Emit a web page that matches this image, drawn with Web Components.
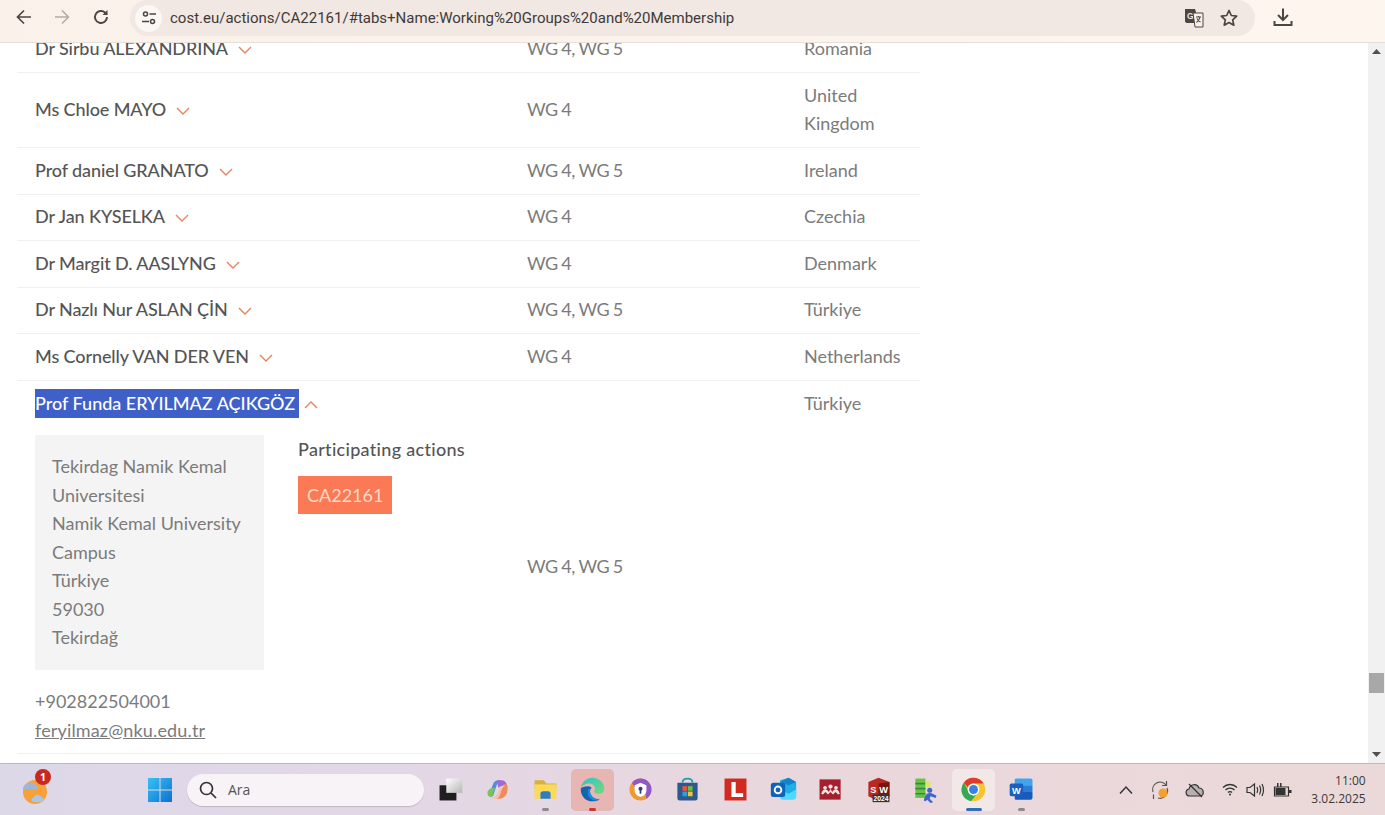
<!DOCTYPE html>
<html lang="en">
<head>
<meta charset="utf-8">
<title>CA22161</title>
<style>
  html, body { height: 100%; margin: 0; }
  body { display: flex; flex-direction: column; overflow: hidden; background: #fff; font-family: "Lato", "Liberation Sans", sans-serif; }
</style>
</head>
<body>
<browser-bar url="cost.eu/actions/CA22161/#tabs+Name:Working%20Groups%20and%20Membership"></browser-bar>

<page-view>
  <member-list>
    <member-row name="Dr Sirbu ALEXANDRINA" groups="WG 4, WG 5" country="Romania"></member-row>
    <member-row name="Ms Chloe MAYO" groups="WG 4" country="United Kingdom"></member-row>
    <member-row name="Prof daniel GRANATO" groups="WG 4, WG 5" country="Ireland"></member-row>
    <member-row name="Dr Jan KYSELKA" groups="WG 4" country="Czechia"></member-row>
    <member-row name="Dr Margit D. AASLYNG" groups="WG 4" country="Denmark"></member-row>
    <member-row name="Dr Nazlı Nur ASLAN ÇİN" groups="WG 4, WG 5" country="Türkiye"></member-row>
    <member-row name="Ms Cornelly VAN DER VEN" groups="WG 4" country="Netherlands"></member-row>
    <member-row name="Prof Funda ERYILMAZ AÇIKGÖZ" groups="WG 4, WG 5" country="Türkiye" open selected>
      <member-detail action="CA22161" phone="+902822504001" email="feryilmaz@nku.edu.tr">
        <span>Tekirdag Namik Kemal Universitesi</span>
        <span>Namik Kemal University Campus</span>
        <span>Türkiye</span>
        <span>59030</span>
        <span>Tekirdağ</span>
      </member-detail>
    </member-row>
  </member-list>
</page-view>

<task-bar>
  <task-btn><svg viewBox="0 0 32 32"><defs><linearGradient id="tv" x1="0" y1="0" x2="1" y2="1"><stop offset="0" stop-color="#ffffff"/><stop offset="1" stop-color="#b5b5b5"/></linearGradient></defs><path d="M3 11h20v18H3z" fill="#1f1f1f"/><path d="M11 3h19v17H11z" fill="url(#tv)"/></svg></task-btn>
  <task-btn><svg viewBox="0 0 32 32"><path fill="#4d8fe0" d="M6 22 11 9c1-3 4-4 7-4h2c-3 1-4 3-5 6l-4 12c-1 2-5 2-5-1z"/><path fill="#a068d8" d="M15 5h6c3 0 5 2 6 5l1 4c-2-2-5-3-8-2l-3 2z"/><path fill="#f08a5d" d="M27 10c2 5 1 14-5 16-2 1-6 1-8 1 3-1 4-3 5-6l3-9c1-2 3-3 5-2z"/><path fill="#7dc15f" d="M4 19c1-3 5-6 9-5l-3 9c-1 3-6 3-6-4z"/><path fill="#f5c4a8" d="M14 27c-3 0-5 0-6-2 3 1 6-1 8-5l3-7c2-1 4-2 6-1-2 0-3 2-4 4l-2 6c-1 3-2 5-5 5z"/></svg></task-btn>
  <task-btn indicator="#8b8b8b"><svg viewBox="0 0 32 32"><path fill="#d8b13c" d="M3 5h11l3 4h12v6H3z"/><path fill="#fbd95a" d="M3 10h26v17H3z"/><path fill="#2f7cc6" d="M10 21c0-2 1-3 3-3h6c2 0 3 1 3 3v6H10z"/></svg></task-btn>
  <task-btn indicator="#c43b36" hover="#e7b5b2"><svg viewBox="0 0 32 32"><defs><linearGradient id="e1" x1="0" y1="0" x2="1" y2="1"><stop offset="0" stop-color="#35c1c9"/><stop offset="1" stop-color="#6fdc7a"/></linearGradient></defs><path fill="url(#e1)" d="M2 15C3 7 9 2 16 2c8 0 14 6 14 13 0 4-3 6-7 6-3 0-5-1-5-3 0-1 1-2 1-3 0-3-3-6-7-6-5 0-9 3-10 6z"/><path fill="#1463ad" d="M2 15c0 9 6 15 14 15 3 0 6-1 8-2-5 1-10-1-11-6-1-3 0-6 2-8-1-1-2-2-4-2-5 0-8 1-9 3z"/><path fill="#1b8bd8" d="M12 14c-2 2-2 6-1 9 1 3 5 6 10 6 2 0 3-1 4-2-4 1-8-1-10-4-2-3-2-6-3-9z"/></svg></task-btn>
  <task-btn><svg viewBox="0 0 32 32"><circle cx="16" cy="16" r="13" fill="#f09a2e"/><path fill="#8f57c7" d="M16 3a13 13 0 0 1 13 13c0 5-3 9-6 11l-2-12c0-3-2-5-5-5s-5 1-7 3L6 8c2-3 6-5 10-5z"/><path fill="#fff" d="M16 8l7 3v6c0 4-3 7-7 8-4-1-7-4-7-8v-6z"/><circle cx="16" cy="15" r="2.4" fill="#3d3a72"/><path d="M15 16h2v5h-2z" fill="#3d3a72"/></svg></task-btn>
  <task-btn><svg viewBox="0 0 32 32"><path fill="#2c5a8f" d="M4 8h24v18c0 2-1 3-3 3H7c-2 0-3-1-3-3z"/><path fill="none" stroke="#2a9bb0" stroke-width="2" d="M10 8c0-3 2-5 6-5s6 2 6 5"/><rect x="10" y="12" width="5.500" height="5.500" fill="#e8563f"/><rect x="16.500" y="12" width="5.500" height="5.500" fill="#6fbb4a"/><rect x="10" y="18.500" width="5.500" height="5.500" fill="#2d9fe0"/><rect x="16.500" y="18.500" width="5.500" height="5.500" fill="#f5c032"/></svg></task-btn>
  <task-btn><svg viewBox="0 0 32 32"><rect x="3" y="3" width="26" height="26" fill="#d32a20"/><path fill="#f3d4cc" d="M11 7h5v13h9v5H11z"/><path fill="#fff" d="M12 7h4v14h9v4H12z"/></svg></task-btn>
  <task-btn><svg viewBox="0 0 32 32"><path fill="#1cb1e6" d="M12 5 22 2l9 5v15l-9 4-10-4z"/><path fill="#0d6dbf" d="M22 2l9 5-9 4-10-4z" opacity=".7"/><path fill="#50d9ff" d="M12 16l10 5 9-5v9c0 2-1 3-3 3H15c-2 0-3-1-3-3z"/><rect x="1" y="8" width="17" height="17" rx="3" fill="#0f63b8"/><circle cx="9.500" cy="16.500" r="4" fill="none" stroke="#fff" stroke-width="2.200"/></svg></task-btn>
  <task-btn><svg viewBox="0 0 32 32"><rect x="3" y="4" width="25" height="24" fill="#a5202f"/><g fill="#f6dfe0"><circle cx="16" cy="12.500" r="2.500"/><circle cx="9.500" cy="14" r="2.200"/><circle cx="22.500" cy="14" r="2.200"/><path d="M5 21c1-4 3-5 5-5 2 0 3 1 4 3l2-4 2 4c1-2 2-3 4-3s4 1 5 5l-2 1-3-3-3 3-3-3-3 3-3-3-3 3z"/></g></svg></task-btn>
  <task-btn><svg viewBox="0 0 32 32"><path fill="#b62a22" d="M4 7l12-5 13 5v17l-13 6-12-6z"/><path fill="#7a1610" d="M16 9l13-2v17l-13 6z"/><text x="10" y="20" font-family="Liberation Sans" font-weight="700" font-size="11" fill="#fff" text-anchor="middle">S</text><text x="22" y="20" font-family="Liberation Sans" font-weight="700" font-size="11" fill="#fff" text-anchor="middle">W</text><rect x="9" y="22" width="20" height="9" fill="#333"/><text x="19" y="30" font-family="Liberation Sans" font-weight="700" font-size="8" fill="#fff" text-anchor="middle">2024</text></svg></task-btn>
  <task-btn><svg viewBox="0 0 32 32"><path fill="#6cc04a" d="M4 3h12v23H4z"/><path fill="#2f8f3a" d="M4 8h12v2H4zm0 6h12v2H4zm0 6h12v2H4z"/><path fill="#d9e86a" d="M16 6h6v8h-6z"/><circle cx="21" cy="17" r="3" fill="#3f65c8"/><path fill="#3f65c8" d="M14 29c1-5 3-9 7-9 3 0 5 2 8 3l-1 3-6-2-1 3 4 4-3 1-4-4-2 2z"/></svg></task-btn>
  <task-btn indicator="#2f6fb5" wide hover="#f2e8e8"><svg viewBox="0 0 32 32"><circle cx="16" cy="16" r="14" fill="#f5c431"/><path fill="#e0392d" d="M16 2a14 14 0 0 1 12 7H16a7 7 0 0 0-6.500 4.500L4.400 8A14 14 0 0 1 16 2z"/><path fill="#35a853" d="M4.400 8l6.100 10.500A7 7 0 0 0 19 22.500L13 30A14 14 0 0 1 4.400 8z"/><circle cx="16" cy="16" r="7" fill="#fff"/><circle cx="16" cy="16" r="5.300" fill="#3b7fe0"/></svg></task-btn>
  <task-btn indicator="#8b8b8b"><svg viewBox="0 0 32 32"><path fill="#41a5ee" d="M9 3h18c1 0 2 1 2 2v6H8V4z"/><path fill="#2b7cd3" d="M8 11h21v8H8z"/><path fill="#185abd" d="M8 19h21v7c0 1-1 2-2 2H9c-1 0-1-1-1-2z"/><rect x="2" y="9" width="16" height="15" rx="2" fill="#1b5fbf"/><text x="10" y="21" font-family="Liberation Sans" font-weight="700" font-size="11" fill="#fff" text-anchor="middle">W</text></svg></task-btn>
</task-bar>

<script>
  // Top browser toolbar
  class BrowserBar extends HTMLElement {
    constructor() {
      super();
      this.attachShadow({ mode: "open" });
      this.shadowRoot.innerHTML = `
        <style>
          :host {
            display: flex;
            align-items: flex-start;
            flex: none;
            height: 42px;
            padding-left: 5px;
            background: linear-gradient(90deg, #faf2ea, #fcf3ec 60%, #fdf6ef);
            border-bottom: 1px solid #e6e0da;
            color: #4d4542;
          }
          .btn { width: 38px; height: 34px; display: flex; align-items: center; justify-content: center; flex: none; }
          .btn.off { color: #b4aaa4; }
          .btn.reload { margin-left: 1px; }
          .omni {
            display: flex;
            align-items: center;
            width: 1125px;
            height: 36px;
            margin-left: 10px;
            padding-right: 9px;
            box-sizing: border-box;
            background: #f1e7e3;
            border-radius: 18px;
          }
          .tune {
            width: 27px; height: 27px; margin-left: 5px;
            border-radius: 50%;
            background: #fbf7f4;
            display: flex; align-items: center; justify-content: center;
            flex: none;
          }
          .url {
            margin-left: 8px;
            flex: 1;
            font: 15px "Roboto", "Liberation Sans", sans-serif;
            color: #3f3a38;
            white-space: nowrap;
          }
          .omni .btn { width: 35px; height: 36px; }
          .dl { margin-left: 9px; }
        </style>
        <div class="btn"><svg width="18" height="18" viewBox="0 0 18 18" fill="none" stroke="currentColor" stroke-width="1.700"><path d="M16 9H2.500M9 2.500 2.500 9 9 15.500"/></svg></div>
        <div class="btn off"><svg width="18" height="18" viewBox="0 0 18 18" fill="none" stroke="currentColor" stroke-width="1.500"><path d="M2 9h13.500M9 2.500 15.500 9 9 15.500"/></svg></div>
        <div class="btn reload"><svg width="18" height="18" viewBox="0 0 18 18" fill="none" stroke="currentColor" stroke-width="1.900"><path d="M15 9a6 6 0 1 1-1.800-4.300L15 6.500"/><path d="M15.500 2v5h-5" fill="currentColor" stroke="none"/></svg></div>
        <div class="omni">
          <div class="tune"><svg width="16" height="16" viewBox="0 0 16 16" fill="none" stroke="#4d4542" stroke-width="1.500"><circle cx="4.500" cy="4" r="2"/><path d="M8.500 4H15M1 11.500h7"/><circle cx="11.500" cy="11.500" r="2"/></svg></div>
          <div class="url"></div>
          <div class="btn"><svg width="20" height="20" viewBox="0 0 20 20"><path fill="#4d4542" d="M1 1h10l1 3v11H3c-1 0-2-1-2-2z"/><text x="6.200" y="11" font-family="Liberation Sans" font-weight="700" font-size="8.500" fill="#f1e7e3" text-anchor="middle">G</text><path fill="#f7f1ee" stroke="#4d4542" stroke-width="1" d="M9 5h10v14H11z"/><path stroke="#4d4542" stroke-width="1.100" fill="none" d="M12 9h5M14.500 8v1M16 9c-.5 3-2 4.500-3.500 5.500M13 10.500c.8 2 2 3 3.500 3.500"/></svg></div>
          <div class="btn"><svg width="20" height="20" viewBox="0 0 20 20" fill="none" stroke="#4d4542" stroke-width="1.700" stroke-linejoin="round"><path d="m10 2.500 2.300 5 5.400.6-4 3.700 1.100 5.400L10 14.500l-4.800 2.700 1.100-5.400-4-3.700 5.400-.6z"/></svg></div>
        </div>
        <div class="btn dl"><svg width="20" height="20" viewBox="0 0 20 20" fill="none" stroke="#4d4542" stroke-width="2"><path d="M10 1.500v11M5 8l5 5 5-5"/><path d="M1.500 14v4h17v-4"/></svg></div>
      `;
      this.shadowRoot.querySelector(".url").textContent = this.getAttribute("url");
    }
  }
  customElements.define("browser-bar", BrowserBar);

  // Scrolling page area with its scrollbar
  class PageView extends HTMLElement {
    constructor() {
      super();
      this.attachShadow({ mode: "open" });
      this.shadowRoot.innerHTML = `
        <style>
          :host { display: flex; flex: 1; min-height: 0; overflow: hidden; background: #fff; }
          .content { flex: 1; min-width: 0; overflow: hidden; }
          .track {
            width: 17px;
            flex: none;
            display: flex;
            flex-direction: column;
            align-items: center;
            background: #f1f1f1;
          }
          .arrow { height: 17px; flex: none; display: flex; align-items: center; justify-content: center; }
          .gap { flex: 1; display: flex; flex-direction: column; justify-content: flex-end; padding-bottom: 53px; width: 100%; align-items: center; }
          .thumb { width: 15px; height: 20px; background: #a8a8a8; }
        </style>
        <div class="content"><slot></slot></div>
        <div class="track">
          <div class="arrow"><svg width="9" height="5" viewBox="0 0 9 5"><path fill="#505050" d="M4.500 0 9 5H0z"/></svg></div>
          <div class="gap"><div class="thumb"></div></div>
          <div class="arrow"><svg width="9" height="5" viewBox="0 0 9 5"><path fill="#505050" d="M0 0h9L4.500 5z"/></svg></div>
        </div>
      `;
    }
  }
  customElements.define("page-view", PageView);

  class MemberList extends HTMLElement {
    constructor() {
      super();
      this.attachShadow({ mode: "open" });
      this.shadowRoot.innerHTML = `
        <style>
          :host { display: block; width: 903px; margin: -16.5px 0 0 17px; font-size: 18px; line-height: 28.5px; color: #7b7b7b; }
        </style>
        <slot></slot>
      `;
    }
  }
  customElements.define("member-list", MemberList);

  class MemberRow extends HTMLElement {
    constructor() {
      super();
      this.attachShadow({ mode: "open" });
      this.shadowRoot.innerHTML = `
        <style>
          :host {
            display: grid;
            grid-template-columns: 492px 277px 134px;
            align-items: center;
            border-bottom: 1px solid #f0f0f0;
            padding: 7.5px 0 9.5px;
          }
          :host([open]) { padding: 8.5px 0; }
          .cell { padding: 0 18px; }
          .name { color: #555; font-weight: 500; letter-spacing: -0.1px; white-space: nowrap; }
          .name b { font-weight: inherit; }
          svg { margin-left: 10px; vertical-align: 1px; }
          :host([selected]) .name { letter-spacing: 0; }
          :host([selected]) svg { margin-left: 5px; }
          :host([selected]) b { background: #3f60c8; color: #fff; display: inline-block; padding-right: 4px; }
          :host([open]) .country { align-self: start; }
          .groups { letter-spacing: -0.45px; word-spacing: -0.5px; }
          .country { padding-right: 10px; }
        </style>
        <div class="cell name">
          <div><b></b><svg width="14" height="8" viewBox="0 0 14 8" fill="none" stroke="#e4845f" stroke-width="1.400"><path class="chev" d="M1 1l6 6 6-6"/></svg></div>
          <slot></slot>
        </div>
        <div class="cell groups"></div>
        <div class="cell country"></div>
      `;
      const root = this.shadowRoot;
      root.querySelector("b").textContent = this.getAttribute("name");
      root.querySelector(".groups").textContent = this.getAttribute("groups");
      root.querySelector(".country").textContent = this.getAttribute("country");
      if (this.hasAttribute("open")) {
        root.querySelector(".chev").setAttribute("d", "M1 7l6-6 6 6");
      }
    }
  }
  customElements.define("member-row", MemberRow);

  class MemberDetail extends HTMLElement {
    constructor() {
      super();
      this.attachShadow({ mode: "open" });
      this.shadowRoot.innerHTML = `
        <style>
          :host { display: block; margin-top: 17px; white-space: normal; color: #7b7b7b; font-weight: 400; letter-spacing: 0; }
          .top { display: flex; gap: 34px; align-items: flex-start; }
          .address {
            width: 229px;
            box-sizing: border-box;
            padding: 17.5px 17px 18.5px;
            background: #f4f4f4;
          }
          ::slotted(span) { display: block; }
          h4 { margin: 0; font: inherit; font-weight: 500; color: #555; letter-spacing: 0.3px; }
          .tag {
            display: inline-block;
            margin-top: 13px;
            padding: 5px 9px 4px;
            background: #fb7a55;
            color: #ffd9c8;
          }
          .contact { margin-top: 17px; }
          a { color: inherit; display: block; letter-spacing: 0.15px; }
        </style>
        <div class="top">
          <div class="address"><slot></slot></div>
          <div>
            <h4>Participating actions</h4>
            <div class="tag"></div>
          </div>
        </div>
        <div class="contact"><div class="phone"></div><a href="#" class="mail"></a></div>
      `;
      const root = this.shadowRoot;
      root.querySelector(".tag").textContent = this.getAttribute("action");
      root.querySelector(".phone").textContent = this.getAttribute("phone");
      root.querySelector(".mail").textContent = this.getAttribute("email");
    }
  }
  customElements.define("member-detail", MemberDetail);

  class TaskBtn extends HTMLElement {
    constructor() {
      super();
      this.attachShadow({ mode: "open" });
      this.shadowRoot.innerHTML = `
        <style>
          :host {
            position: relative;
            display: flex;
            align-items: center;
            justify-content: center;
            width: 43px;
            height: 42px;
            border-radius: 5px;
            flex: none;
          }
          ::slotted(svg) { width: 27px; height: 27px; }
          .dot {
            position: absolute;
            left: 50%;
            bottom: 0;
            width: 7px;
            height: 3px;
            margin-left: -3.5px;
            border-radius: 2px;
          }
          :host([wide]) .dot { width: 16px; margin-left: -8px; }
        </style>
        <slot></slot>
        <div class="dot"></div>
      `;
      if (this.hasAttribute("hover")) this.style.background = this.getAttribute("hover");
      if (this.hasAttribute("indicator")) this.shadowRoot.querySelector(".dot").style.background = this.getAttribute("indicator");
    }
  }
  customElements.define("task-btn", TaskBtn);

  class TaskBar extends HTMLElement {
    constructor() {
      super();
      this.attachShadow({ mode: "open" });
      this.shadowRoot.innerHTML = `
        <style>
          :host {
            display: flex;
            align-items: center;
            flex: none;
            height: 51px;
            border-top: 1px solid #bdb9bf;
            background: linear-gradient(90deg, #dcd8e8 0%, #e3d7e6 30%, #e9d7dc 60%, #ebd9d9 100%);
            font-family: "Open Sans", "Liberation Sans", sans-serif;
            color: #333;
          }
          .weather { position: relative; width: 36px; height: 36px; margin-left: 17px; flex: none; }
          .badge {
            position: absolute;
            top: -3px;
            left: 18px;
            width: 16px;
            height: 16px;
            border-radius: 50%;
            background: #c8281e;
            color: #fff;
            font-size: 10.500px;
            font-weight: 700;
            line-height: 16px;
            text-align: center;
          }
          .start { margin-left: 93px; width: 28px; height: 28px; flex: none; }
          .search {
            display: flex;
            align-items: center;
            gap: 11px;
            width: 237px;
            height: 32px;
            margin-left: 13px;
            padding-left: 12px;
            box-sizing: border-box;
            border-radius: 16px;
            background: #f7f3f6;
            box-shadow: 0 1px 1px #bfb9c2;
            font-size: 14px;
            color: #555;
            flex: none;
          }
          .apps { display: flex; gap: 4.600px; margin-left: 4.500px; flex: none; }
          .tray { display: flex; align-items: center; margin-left: 75px; flex: none; }
          .tray svg { flex: none; }
          .clock { width: 73px; text-align: right; font-size: 12px; line-height: 18px; color: #3a3a3a; flex: none; }
        </style>
        <div class="weather">
          <svg width="36" height="36" viewBox="0 0 36 36"><circle cx="18" cy="20" r="12" fill="#f6a13a"/><path fill="#9fb6d8" d="M6 17c0-3 2-5 5-5 1-2 6-2 7 1 2 0 3 2 2 4z"/><path fill="#a9c6e8" d="M17 30c-3 0-3-4 0-5 1-3 6-3 7 0 3 0 4 5 1 5z"/></svg>
          <div class="badge">1</div>
        </div>
        <svg class="start" viewBox="0 0 28 28"><defs><linearGradient id="w" x1="0" y1="0" x2="1" y2="1"><stop offset="0" stop-color="#37c3f3"/><stop offset="1" stop-color="#0f6fd0"/></linearGradient></defs><path fill="url(#w)" d="M2 2h11.500v11.500H2zM14.500 2H26v11.500H14.500zM2 14.500h11.500V26H2zM14.500 14.500H26V26H14.500z"/></svg>
        <div class="search">
          <svg width="18" height="18" viewBox="0 0 18 18" fill="none" stroke="#333" stroke-width="1.700"><circle cx="7.500" cy="7.500" r="6"/><path d="m12 12 5 5"/></svg>
          <span>Ara</span>
        </div>
        <div class="apps"><slot></slot></div>
        <div class="tray">
          <svg width="16" height="10" viewBox="0 0 16 10" fill="none" stroke="#333" stroke-width="1.500"><path d="M2 8.500 8 2l6 6.500"/></svg>
          <svg style="margin-left:15px" width="22" height="22" viewBox="0 0 22 22" fill="none" stroke="#555" stroke-width="1.200"><path d="M4 13a7.500 7.500 0 0 1 13-7M18 9a7.500 7.500 0 0 1-9 10"/><path d="M17.500 2v4.500H13M4.500 20v-4.500"/><circle cx="14" cy="14" r="4.500" fill="#f5a02c" stroke="none"/></svg>
          <svg style="margin-left:14px" width="20" height="16" viewBox="0 0 20 16" fill="#b8b0b0" stroke="#333" stroke-width="1.200"><path d="M5 14c-5 0-5-6-1-7 1-5 8-6 10-1 5 0 6 8 1 8z"/><path d="m4 2 13 13"/></svg>
          <svg style="margin-left:17px" width="16" height="13" viewBox="0 0 16 13" fill="none" stroke="#333" stroke-width="1.300"><path d="M1 4.500c4-4 10-4 14 0M3.500 7c2.500-2.500 6.500-2.500 9 0M6 9.500c1-1 3-1 4 0"/><circle cx="8" cy="11.500" r="1" fill="#333" stroke="none"/></svg>
          <svg style="margin-left:8px" width="20" height="16" viewBox="0 0 20 16" fill="none" stroke="#333" stroke-width="1.200"><path d="M1 5.500h3L8.500 2v12L4 10.500H1z"/><path d="M11 5c1 2 1 4 0 6M13.500 3.500c1.500 3 1.500 6 0 9M16 2c2 4 2 8 0 12"/></svg>
          <svg style="margin-left:7px" width="20" height="16" viewBox="0 0 20 16"><path fill="none" stroke="#333" stroke-width="1.200" d="M1.500 5h14v9h-14z"/><path fill="#333" d="M2.500 6h10v7h-10zM16 8h2.500v3H16zM4 1h1.500v4H4zM7 1h1.500v4H7z"/></svg>
          <div class="clock">11:00<br>3.02.2025</div>
        </div>
      `;
    }
  }
  customElements.define("task-bar", TaskBar);
</script>
</body>
</html>
